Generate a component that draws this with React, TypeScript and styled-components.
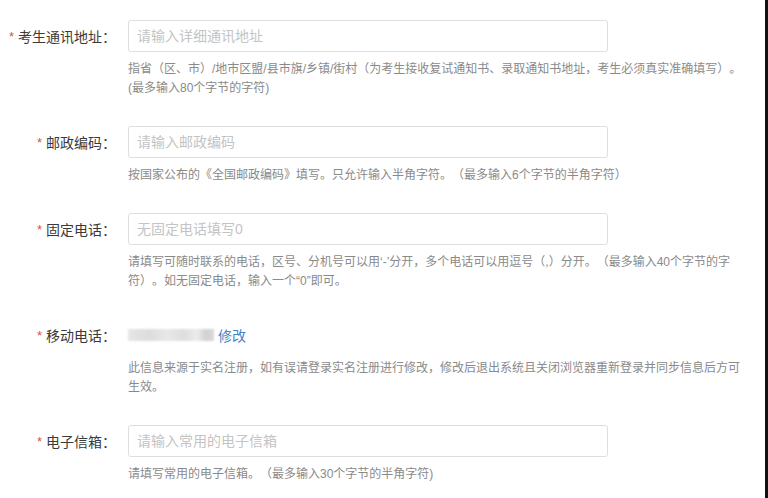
import React from 'react';
import styled, { createGlobalStyle } from 'styled-components';

const fields = [
  {
    label: '考生通讯地址',
    placeholder: '请输入详细通讯地址',
    help: '指省（区、市）/地市区盟/县市旗/乡镇/街村（为考生接收复试通知书、录取通知书地址，考生必须真实准确填写）。(最多输入80个字节的字符)',
  },
  {
    label: '邮政编码',
    placeholder: '请输入邮政编码',
    help: '按国家公布的《全国邮政编码》填写。只允许输入半角字符。（最多输入6个字节的半角字符）',
  },
  {
    label: '固定电话',
    placeholder: '无固定电话填写0',
    help: '请填写可随时联系的电话，区号、分机号可以用‘-’分开，多个电话可以用逗号（,）分开。（最多输入40个字节的字符）。如无固定电话，输入一个“0”即可。',
  },
  {
    label: '移动电话',
    mobile: true,
    help: '此信息来源于实名注册，如有误请登录实名注册进行修改，修改后退出系统且关闭浏览器重新登录并同步信息后方可生效。',
  },
  {
    label: '电子信箱',
    placeholder: '请输入常用的电子信箱',
    help: '请填写常用的电子信箱。（最多输入30个字节的半角字符)',
  },
];

const App = () => {
  return (
    <>
      <GlobalStyle />
      <Page>
        <Form>
          {fields.map((f) => (
            <Field key={f.label}>
              <Label>
                <Required>*</Required>
                {f.label}：
              </Label>
              {f.mobile ? (
                <MobileValue>
                  <Masked />
                  <EditLink href="#">修改</EditLink>
                </MobileValue>
              ) : (
                <Input placeholder={f.placeholder} />
              )}
              <Help>{f.help}</Help>
            </Field>
          ))}
        </Form>
        <EdgeBar />
      </Page>
    </>
  );
};

export default App;

const GlobalStyle = createGlobalStyle`
  html, body {
    margin: 0;
    padding: 0;
    background: #fff;
  }
  body {
    font-family: "Liberation Sans", "Noto Sans CJK SC", sans-serif;
    text-spacing-trim: space-all;
  }
`;

const Page = styled.div`
  display: flex;
  width: 768px;
  height: 498px;
  overflow: hidden;
`;

const Form = styled.div`
  flex: 1;
  padding-top: 20px;
`;

const EdgeBar = styled.div`
  width: 3px;
  background: #111;
`;

const Field = styled.div`
  display: grid;
  grid-template-columns: 116px 480px;
  column-gap: 12px;
  margin-bottom: 28px;
`;

const Label = styled.label`
  height: 32px;
  display: flex;
  align-items: center;
  justify-content: flex-end;
  font-size: 14px;
  color: #3a3a3a;
  white-space: nowrap;
`;

const Required = styled.span`
  color: #d8553a;
  font-size: 13px;
  margin-right: 4px;
`;

const Input = styled.input`
  box-sizing: border-box;
  width: 480px;
  height: 32px;
  padding: 0 8px;
  border: 1px solid #dedede;
  border-radius: 3px;
  font-family: inherit;
  font-size: 14px;
  color: #333;
  outline: none;

  &::placeholder {
    color: #c4c4c4;
  }
`;

const MobileValue = styled.div`
  height: 32px;
  display: flex;
  align-items: center;
  gap: 4px;
`;

const Masked = styled.span`
  width: 86px;
  height: 12px;
  background: linear-gradient(
    90deg,
    #e6e6e6 0%,
    #dcdcdc 25%,
    #e8e8e8 45%,
    #dedede 65%,
    #ececec 80%,
    #d2d2d2 90%,
    #d8d8d8 100%
  );
  filter: blur(1px);
`;

const EditLink = styled.a`
  font-size: 14px;
  color: #3f86c8;
  text-decoration: none;
`;

const Help = styled.p`
  grid-column: 2;
  width: 616px;
  margin: 8px 0 0;
  font-size: 12px;
  line-height: 19px;
  color: #8a8a8a;
`;
